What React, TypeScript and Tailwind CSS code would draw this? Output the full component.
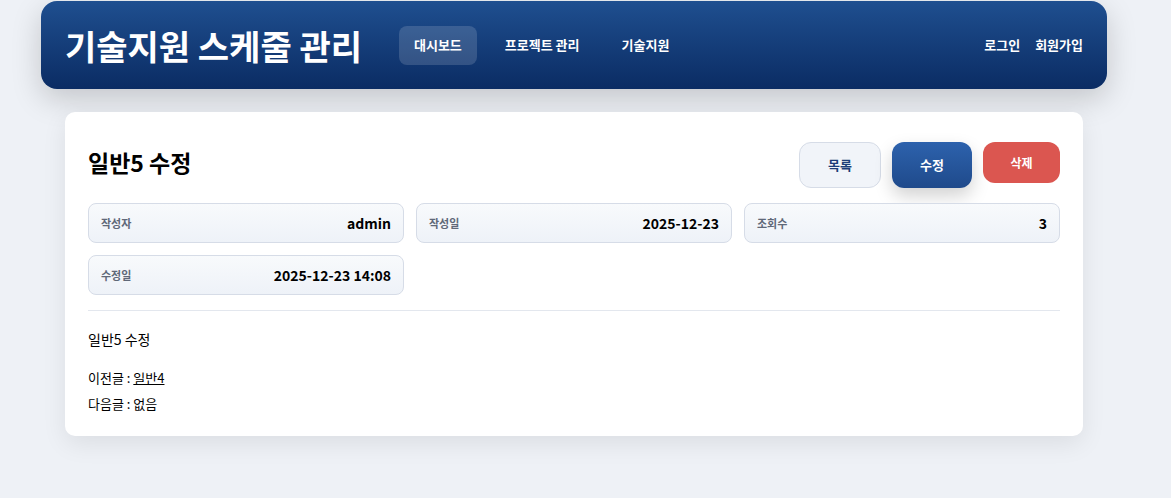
const font = { fontFamily: '"Noto Sans CJK KR", "Noto Sans", sans-serif' };

const InfoBox = ({ label, value }: { label: string; value: string }) => (
  <div className="flex items-center justify-between h-10 px-3 rounded-lg border border-[#d6dce7] bg-gradient-to-b from-[#f8fafc] to-[#eef2f8]">
    <span className="text-[11px] font-bold text-[#5f6878]">{label}</span>
    <span className="text-[14px] font-bold text-black">{value}</span>
  </div>
);

export default function App() {
  return (
    <div className="min-h-[498px] bg-[#eef1f6] text-black" style={font}>
      <div className="ml-[41px] w-[1066px] pt-px">
        <header className="flex items-center h-[88px] px-6 rounded-2xl bg-gradient-to-b from-[#1f4f90] to-[#0b2c63] shadow-[0_10px_30px_rgba(0,0,0,0.18)]">
          <h1 className="text-[34px] font-bold text-white mr-[37px]">기술지원 스케줄 관리</h1>
          <nav className="flex items-center gap-[14px] text-[13px] font-bold text-white">
            <a className="px-[15px] h-[39px] flex items-center rounded-lg bg-white/15">대시보드</a>
            <a className="px-[14px] h-[39px] flex items-center">프로젝트 관리</a>
            <a className="px-[14px] h-[39px] flex items-center">기술지원</a>
          </nav>
          <div className="ml-auto flex gap-[15px] text-[13px] font-bold text-white">
            <a>로그인</a>
            <a>회원가입</a>
          </div>
        </header>

        <div className="px-6 mt-[23px]">
          <main className="bg-white rounded-[10px] px-[23px] pt-[30px] pb-[19px] shadow-[0_8px_24px_rgba(0,0,0,0.08)]">
            <div className="flex items-start justify-between">
              <h2 className="text-[23px] font-bold mt-[3px]">일반5 수정</h2>
              <div className="flex gap-[11px]">
                <button className="w-[82px] h-[46px] rounded-xl border border-[#d6dce7] bg-[#f1f4f9] text-[13px] font-bold text-[#1c3d78]">
                  목록
                </button>
                <button className="w-[80px] h-[46px] rounded-xl bg-gradient-to-b from-[#2d62ad] to-[#1f4a8b] text-[13px] font-bold text-white shadow-[0_8px_18px_rgba(0,0,0,0.18)]">
                  수정
                </button>
                <button className="w-[77px] h-[41px] rounded-xl bg-[#db5650] text-[12px] font-bold text-white">
                  삭제
                </button>
              </div>
            </div>

            <div className="grid grid-cols-3 gap-3 mt-[15px]">
              <InfoBox label="작성자" value="admin" />
              <InfoBox label="작성일" value="2025-12-23" />
              <InfoBox label="조회수" value="3" />
              <InfoBox label="수정일" value="2025-12-23 14:08" />
            </div>

            <div className="border-t border-[#e3e7ee] mt-[15px]" />

            <p className="text-[14px] mt-[18px]">일반5 수정</p>

            <div className="mt-[15px] text-[13px] leading-[26px]">
              <div>
                이전글 : <a className="underline">일반4</a>
              </div>
              <div>다음글 : 없음</div>
            </div>
          </main>
        </div>
      </div>
    </div>
  );
}
